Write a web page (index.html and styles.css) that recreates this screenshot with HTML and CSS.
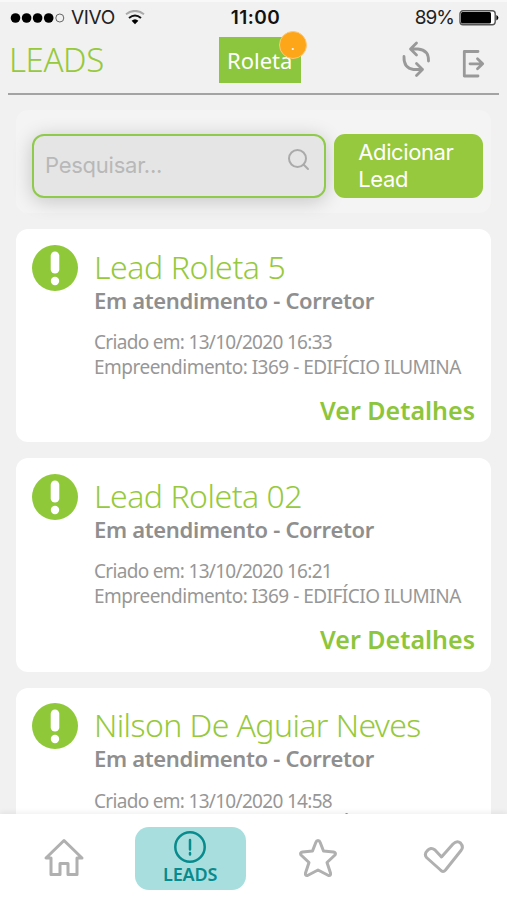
FILE: index.html
```html
<!DOCTYPE html>
<html lang="pt-BR">
<head>
<meta charset="utf-8">
<title>Leads</title>
<link rel="stylesheet" href="styles.css">
</head>
<body>
<div class="app">
  <div class="status">
    <div class="carrier">
      <svg width="55" height="12" viewBox="0 0 55 12"><circle cx="5.5" cy="6" r="4.8"/><circle cx="16.6" cy="6" r="4.8"/><circle cx="27.6" cy="6" r="4.8"/><circle cx="38.7" cy="6" r="4.8"/><circle cx="49.8" cy="6" r="4" fill="none" stroke="#666"/></svg>
      <span class="vivo">VIVO</span>
      <svg class="wifi" width="20" height="15" viewBox="0 0 20 15" fill="none" stroke-width="2"><path d="M1 4.2Q10-2.4 19 4.2" stroke="#aaa"/><path d="M4 8Q10 3 16 8" stroke="#111"/><path d="M6.6 10.8Q10 7.6 13.4 10.8L10 14.2z" fill="#000"/></svg>
    </div>
    <span class="clock">11:00</span>
    <div class="power">
      <span class="percent">89%</span>
      <svg width="40" height="16" viewBox="0 0 40 16"><rect x="1" y=".8" width="35.2" height="14" rx="3" fill="#fff" stroke="#555" stroke-width="1.4"/><rect x="2" y="2" width="30" height="11.6" rx="1.5"/><path d="M37.4 5q2 1 2 2.800t-2 2.800z"/></svg>
    </div>
  </div>
  <header class="header">
    <h1 class="heading">LEADS</h1>
    <div class="roulette"><span class="rtext">Roleta</span><span class="badge">.</span></div>
    <div class="actions">
      <svg class="sync" width="30" height="38" viewBox="0 0 30 38"><path d="M9 9H16Q27 10 26.500 21M14.500 3L8.500 9L14.500 15M2 16.500Q1.500 28 11.500 29.500H20.500M14.500 23.500L20.500 29.500L14.500 35.500"/></svg>
      <svg class="exit" width="24" height="30" viewBox="0 0 24 30"><path d="M16 2.500H2.300V27H16M8 14.800H20.500M15.500 9.800L20.700 14.800L15.500 19.800"/></svg>
    </div>
  </header>
  <main class="content">
    <section class="tools">
      <div class="search"><span class="hint">Pesquisar...</span><svg width="24" height="24" viewBox="0 0 24 24"><circle cx="10.500" cy="10.500" r="8.500"/><path d="M16.500 16.500L21 21"/></svg></div>
      <div class="add">Adicionar<br>Lead</div>
    </section>
    <article class="card">
      <svg class="alert" width="46" height="46" viewBox="0 0 46 46"><circle cx="23" cy="23" r="23"/><rect class="mark" x="18.700" y="6.500" width="8.600" height="22" rx="4.300"/><circle class="mark" cx="23" cy="36" r="4.200"/></svg>
      <div class="info">
        <h2 class="name"><span class="n1">Lead Roleta 5</span></h2>
        <p class="state">Em atendimento - Corretor</p>
        <p class="meta m1">Criado em: 13/10/2020 16:33</p>
        <p class="meta m2">Empreendimento: I369 - EDIFÍCIO ILUMINA</p>
        <p class="details">Ver Detalhes</p>
      </div>
    </article>
    <article class="card">
      <svg class="alert" width="46" height="46" viewBox="0 0 46 46"><circle cx="23" cy="23" r="23"/><rect class="mark" x="18.700" y="6.500" width="8.600" height="22" rx="4.300"/><circle class="mark" cx="23" cy="36" r="4.200"/></svg>
      <div class="info">
        <h2 class="name"><span class="n2">Lead Roleta 02</span></h2>
        <p class="state">Em atendimento - Corretor</p>
        <p class="meta m1">Criado em: 13/10/2020 16:21</p>
        <p class="meta m2">Empreendimento: I369 - EDIFÍCIO ILUMINA</p>
        <p class="details">Ver Detalhes</p>
      </div>
    </article>
    <article class="card">
      <svg class="alert" width="46" height="46" viewBox="0 0 46 46"><circle cx="23" cy="23" r="23"/><rect class="mark" x="18.700" y="6.500" width="8.600" height="22" rx="4.300"/><circle class="mark" cx="23" cy="36" r="4.200"/></svg>
      <div class="info">
        <h2 class="name"><span class="n3">Nilson De Aguiar Neves</span></h2>
        <p class="state">Em atendimento - Corretor</p>
        <p class="meta m1">Criado em: 13/10/2020 14:58</p>
        <p class="meta m2">Empreendimento: I369 - EDIFÍCIO ILUMINA</p>
      </div>
    </article>
  </main>
  <nav class="tabs">
    <div class="tab home"><svg width="42" height="42" viewBox="0 0 42 42"><path d="M21 3.500L3 21H8V37.500H17V26.500H25V37.500H34V21H39Z"/></svg></div>
    <div class="tab active"><svg width="34" height="34" viewBox="0 0 34 34"><circle cx="17" cy="17" r="14.700"/><path d="M17 10V19.500M17 23V24.500"/></svg><span class="label">LEADS</span></div>
    <div class="tab star"><svg width="42" height="42" viewBox="0 0 42 42"><path d="M21 3.500Q22.500 3.500 23 5L26.500 14L36.500 15Q39.500 16 38 18L30 25.500L33.500 36Q34 39 31.500 38.500L21 33L10.500 38.500Q8 39 8.500 36L12 25.500L4 18Q2.500 16 5.500 15L15.500 14L19 5Q19.500 3.500 21 3.500Z"/></svg></div>
    <div class="tab"><svg width="42" height="42" viewBox="0 0 42 42"><path d="M4 14Q7.500 9.500 12 13L18.500 20L30 7Q34 3 37.500 6Q41 10 38 13.500L22.500 33Q20 36 17.500 33L3.500 20.500Q1 17 4 14Z"/></svg></div>
  </nav>
</div>
</body>
</html>
```
FILE: styles.css
```css
* { box-sizing: border-box; margin: 0; padding: 0; }
body { background: #f1f1f1; font-family: "Noto Sans", "Open Sans", sans-serif; overflow: hidden; }
svg { display: block; flex: none; }
span { white-space: nowrap; }
.app { width: 507px; height: 900px; display: flex; flex-direction: column; overflow: hidden; border-top: 2px solid #f8f8f8; }
.status { flex: none; height: 31px; padding: 0 8px 0 10px; display: grid; grid-template-columns: 1fr auto 1fr; align-items: center; font: 19px/31px Inter, sans-serif; color: #222; }
.carrier { display: flex; align-items: center; }
.vivo { margin-left: 6px; letter-spacing: -.3px; }
.wifi { margin-left: 10px; }
.clock { font-weight: 600; letter-spacing: .5px; color: #111; padding-left: 2px; }
.power { display: flex; align-items: center; justify-content: flex-end; gap: 5px; }
.percent { letter-spacing: -1px; }
.header { flex: none; height: 62px; margin: 0 8px; border-bottom: 2px solid #a3a3a3; display: flex; align-items: flex-start; }
.heading { width: 211px; padding-left: 1px; font: 300 33px/54px "Noto Sans", sans-serif; letter-spacing: -.4px; color: #96c93d; }
.roulette { position: relative; width: 82px; height: 46px; margin-top: 4px; background: #8cc63f; color: #fff; font-size: 22px; line-height: 46px; padding-left: 8px; }
.badge { position: absolute; left: 60px; top: -6px; width: 28px; height: 28px; border-radius: 50%; background: #fda619; border: 1px solid #ffc875; font-size: 14px; line-height: 26px; text-align: center; }
.actions { margin-left: auto; display: flex; gap: 30px; padding-right: 13px; }
.actions svg, .search svg, .tab svg { fill: none; stroke: #999; stroke-width: 2.8; stroke-linecap: round; stroke-linejoin: round; }
.sync { margin-top: 7px; }
.exit { margin-top: 16px; }
.content { flex: 1; min-height: 0; padding: 15px 16px 0; display: flex; flex-direction: column; gap: 16px; overflow: hidden; }
.tools { flex: none; height: 103px; border-radius: 12px; background: #f4f4f4; padding: 24px 8px 0 16px; display: flex; gap: 8px; }
.search { width: 295px; height: 64px; border: 2px solid #8fca4b; border-radius: 12px; background: #e5e5e5; box-shadow: 0 3px 20px rgba(0,0,0,.2); display: flex; justify-content: space-between; align-items: center; padding: 0 13px 0 11px; font: 22px/28px Inter, sans-serif; color: #b8b8b8; }
.hint { letter-spacing: -.25px; margin-top: -2px; }
.search svg { stroke: #aaa; stroke-width: 2; margin-bottom: 13px; }
.add { width: 149px; height: 64px; border-radius: 11px; background: #96c93d; color: #fff; padding: 5px 0 0 24px; font: 22px/27px Inter, sans-serif; letter-spacing: -.4px; }
.card { flex: none; height: 213.3px; border-radius: 12px; background: #fff; display: flex; gap: 16px; padding: 15.500px 16px 0; }
.alert { fill: #8fc93a; }
.alert .mark { fill: #fff; }
.info { flex: 1; min-width: 0; color: #8f8f8f; white-space: nowrap; }
.name { font-size: 32px; line-height: 43px; font-weight: 300; color: #96c93d; }
.n1 { letter-spacing: -.4px; }
.n2 { letter-spacing: -.48px; }
.n3 { letter-spacing: -.58px; }
.state { font-size: 22px; line-height: 24px; font-weight: 600; letter-spacing: -.32px; }
.meta { font-size: 19px; line-height: 24.500px; font-weight: 400; color: #979797; }
.m1 { margin-top: 18.500px; letter-spacing: -.69px; }
.m2 { letter-spacing: -.51px; }
.details { margin-top: 15px; text-align: right; font-size: 25px; line-height: 32px; font-weight: 600; color: #8dc53b; }
.tabs { position: relative; flex: none; height: 86px; background: #fff; box-shadow: 0 -2px 5px rgba(0,0,0,.06); display: grid; grid-template-columns: repeat(4, 1fr); padding-top: 13px; }
.tab { display: flex; flex-direction: column; align-items: center; padding-top: 10px; }
.home, .star { padding-left: 2px; }
.tab svg { stroke: #b0b0b0; stroke-width: 3; }
.tab.active { width: 111px; height: 63px; justify-self: center; background: #a9dedf; border-radius: 14px; padding-top: 3px; color: #078b8d; }
.tab.active svg { stroke: #078b8d; stroke-width: 2.500; }
.label { font-size: 18px; line-height: 20px; font-weight: 600; letter-spacing: -.2px; }
```
